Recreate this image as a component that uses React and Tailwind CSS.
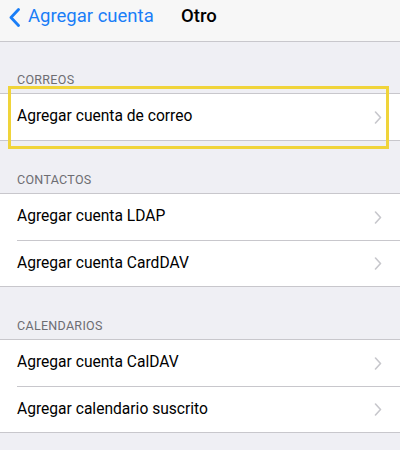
import { Fragment } from 'react';

const sections = [
  { title: 'CORREOS', items: ['Agregar cuenta de correo'] },
  { title: 'CONTACTOS', items: ['Agregar cuenta LDAP', 'Agregar cuenta CardDAV'] },
  { title: 'CALENDARIOS', items: ['Agregar cuenta CalDAV', 'Agregar calendario suscrito'] },
];

const Chevron = () => (
  <svg width="8" height="13" viewBox="0 0 8 13" fill="none" className="shrink-0">
    <polyline points="1.5,1 6.5,6.5 1.5,12" stroke="#c7c7cc" strokeWidth="1.6" strokeLinecap="round" strokeLinejoin="round" />
  </svg>
);

export default function App() {
  return (
    <div className="relative w-[400px] h-[450px] overflow-hidden bg-[#efeff4]" style={{ fontFamily: 'Roboto, Inter, sans-serif' }}>
      {/* nav bar */}
      <div className="relative h-[42px] bg-[#f7f7f7] border-b border-[#c8c7cc] flex items-center pb-[7px]">
        <div className="flex items-center pl-[9px] text-[#1a7ef7]">
          <svg width="11" height="19" viewBox="0 0 11 19" fill="none">
            <polyline points="9.5,1.5 2,9.5 9.5,17.5" stroke="#1a7ef7" strokeWidth="2.8" strokeLinecap="round" strokeLinejoin="round" />
          </svg>
          <span className="ml-[8px] text-[18.5px]">Agregar cuenta</span>
        </div>
        <span className="absolute left-[181px] text-[18.5px] font-medium text-black">Otro</span>
      </div>

      {sections.map((s, idx) => (
        <Fragment key={s.title}>
          <div className={`${idx === 0 ? 'h-[51px]' : 'h-[52px]'} flex items-end pl-[17px] pb-[5px] text-[12.5px] leading-[16px] text-[#6d6d72] tracking-[0.3px]`}>
            {s.title}
          </div>
          <div className="bg-white border-y border-[#c8c7cc]">
            {s.items.map((item, i) => (
              <div key={item} className="flex">
                <div className={`flex-1 ml-[17px] h-[46px] flex items-center pr-[18px] ${i > 0 ? 'border-t border-[#c8c7cc]' : ''}`}>
                  <span className="flex-1 text-[15.6px] text-black">{item}</span>
                  <Chevron />
                </div>
              </div>
            ))}
          </div>
        </Fragment>
      ))}

      {/* highlight box */}
      <div className="absolute left-[8px] top-[86px] w-[381px] h-[63px] border-[3px] border-[#f0d43a]" />
    </div>
  );
}
